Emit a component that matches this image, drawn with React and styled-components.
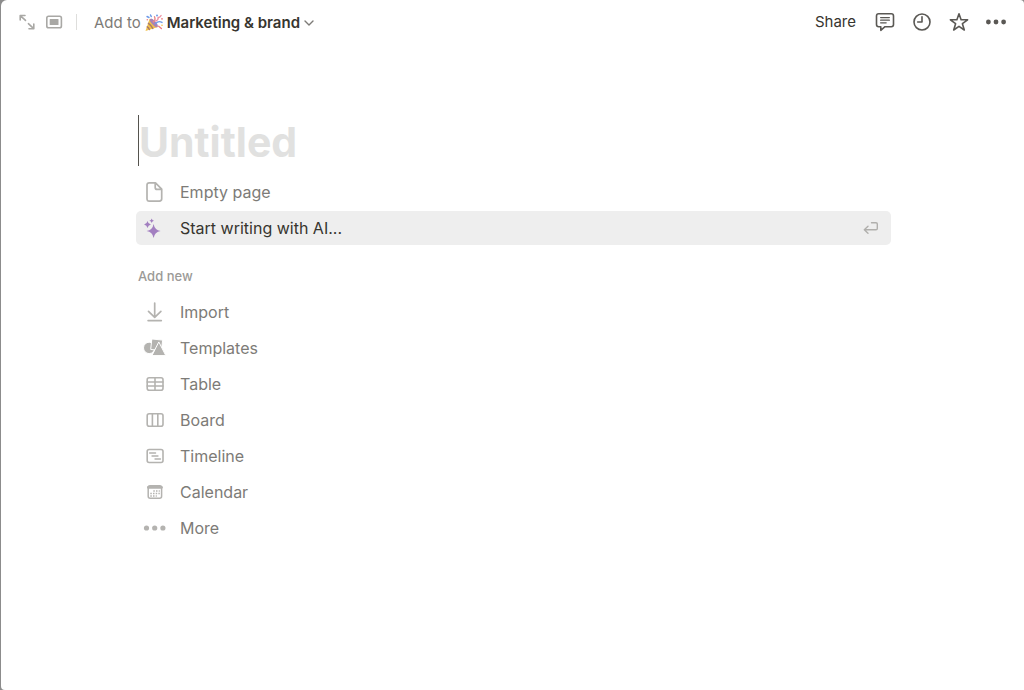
import React from 'react'
import styled, { createGlobalStyle } from 'styled-components'

const GlobalStyle = createGlobalStyle`
    * {
        box-sizing: border-box;
    }

    body {
        margin: 0;
        background: #8c8c8c;
        font-family: Inter, "Liberation Sans", sans-serif;
        color: #37352f;
    }

    button, input {
        font-family: inherit;
        color: inherit;
    }
`

const Page = styled.div`
    min-height: 100vh;
    margin-left: 1px;
    background: #fff;
    border-radius: 6px 4px 0 4px;
`

const Topbar = styled.header`
    display: flex;
    align-items: center;
    justify-content: space-between;
    height: 44px;
    padding: 0 18px 0 17px;
`

const Group = styled.div`
    display: flex;
    align-items: center;
    gap: ${props => props.$gap}px;
`

const PlainButton = styled.button`
    display: flex;
    align-items: center;
    padding: 0;
    border: 0;
    background: none;
    color: ${props => props.$muted ? '#a9a8a5' : '#5a5854'};
    cursor: pointer;
`

const Divider = styled.div`
    width: 1px;
    height: 16px;
    margin: 0 17px 0 13px;
    background: #dededc;
`

const LocationButton = styled(PlainButton)`
    gap: 3px;
    padding-top: 2px;
    font-size: 15px;
    line-height: 20px;
    color: #7d7b77;

    strong {
        font-weight: 600;
        color: #37352f;
    }
`

const ShareButton = styled(PlainButton)`
    margin-right: 2px;
    font-size: 15px;
    line-height: 20px;
    color: #37352f;
`

const Content = styled.main`
    padding: 71px 133px 40px 135px;
`

const TitleInput = styled.input`
    display: block;
    width: calc(100% - 2px);
    height: 51px;
    margin: 0 0 9px 2px;
    padding: 2px 0 0;
    border: 0;
    border-left: 1px solid #55534e;
    outline: 0;
    background: none;
    font-size: 41px;
    font-weight: 700;

    &::placeholder {
        color: #e1e1e0;
        opacity: 1;
    }
`

const List = styled.div`
    display: flex;
    flex-direction: column;
    gap: 2px;
`

const Row = styled.button`
    display: flex;
    align-items: center;
    width: 100%;
    height: 34px;
    padding: 0 12px 0 7px;
    border: 0;
    border-radius: 5px;
    background: ${props => props.$active ? '#eeeeee' : 'none'};
    color: ${props => props.$active ? '#37352f' : '#7d7b77'};
    font-size: 16px;
    line-height: 24px;
    text-align: left;
    cursor: pointer;
`

const RowIcon = styled.span`
    display: flex;
    width: 24px;
    margin-right: 13px;
    color: #b4b3b0;
`

const RowLabel = styled.span`
    flex: 1;
`

const SectionLabel = styled.h2`
    margin: 21px 0 8px 2px;
    font-size: 13px;
    line-height: 21px;
    font-weight: 500;
    color: #9b9a97;
`

const Icon = ({ width = 24, height = 24, stroke = 1.6, children }) => (
    <svg
        width={width}
        height={height}
        viewBox={`0 0 ${width} ${height}`}
        fill="none"
        stroke="currentColor"
        strokeWidth={stroke}
        strokeLinecap="round"
        strokeLinejoin="round"
        aria-hidden="true"
    >
        {children}
    </svg>
)

const ExpandIcon = () => (
    <Icon width={18} height={18} stroke={1.6}>
        <path d="M2.2 7V2.5H7M2.5 2.8l5 4.6M15.8 11v4.7H11M15.4 15.4l-5-4.7" />
    </Icon>
)

const PeekIcon = () => (
    <Icon width={18} height={18} stroke={1.6}>
        <rect x="1.8" y="3.2" width="14.6" height="11.6" rx="1.8" />
        <rect x="4.7" y="5.9" width="8.8" height="6.2" rx=".4" fill="currentColor" stroke="none" />
    </Icon>
)

const PartyIcon = () => (
    <Icon width={20} height={20} stroke={1.4}>
        <path d="M1.5 18L5.6 5.8q5.600 1.600 8.400 8.200z" fill="#f2c14a" stroke="none" />
        <path d="M4.400 10.300q3.200 2.200 4.400 5.300M3.200 13.800q1.600 1 2.200 2.800" stroke="#a97a68" />
        <ellipse cx="9.800" cy="9.900" rx="2" ry="5.400" transform="rotate(-42 9.800 9.900)" fill="#a983b4" stroke="none" />
        <path d="M9.300 8.900q2.700-2.200 1.200-5.200" stroke="#e98a8a" />
        <path d="M11.600 10.400q3-3 6.400-1" stroke="#6d9be8" />
        <path d="M11.800 8q2.800-1 2.300-3.500 1.800.2 3-2" stroke="#ee91a3" />
        <path d="M3 3.500l2 1M6.500 2l.8 1.600" stroke="#6d9be8" />
        <path d="M14.700 13.200l2.700 2.300" stroke="#ec7b82" />
        <g stroke="none">
            <circle cx="13" cy="2.500" r="1" fill="#6d9be8" />
            <circle cx="18" cy="5.800" r=".9" fill="#ec7b82" />
            <circle cx="3.300" cy="6.700" r=".8" fill="#ec7b82" />
            <circle cx="18" cy="12.300" r=".8" fill="#f4c044" />
        </g>
    </Icon>
)

const ChevronIcon = () => (
    <Icon width={12} height={12} stroke={1.4}>
        <path d="M2 4l4 4 4-4" />
    </Icon>
)

const CommentIcon = () => (
    <Icon width={20} height={20}>
        <path d="M3.700 1.800h12.600q2.200 0 2.200 2.200v8.500q0 2.200-2.200 2.200H10l-4.200 3.600v-3.600H3.700q-2.200 0-2.200-2.200V4q0-2.200 2.200-2.200z" />
        <path d="M5.600 5.600h8.800M5.600 8.200h8.800M5.600 10.800h5.600" strokeWidth="1.200" />
    </Icon>
)

const ClockIcon = () => (
    <Icon width={20} height={20}>
        <circle cx="10" cy="10" r="8" />
        <path d="M10 4.800V10H5.700" />
    </Icon>
)

const StarIcon = () => (
    <Icon width={20} height={20}>
        <path d="M10 1.700l2.100 6 6.500.1-5.200 3.900 1.900 6.300-5.300-3.700L4.700 18l1.900-6.300-5.200-3.900 6.500-.1z" />
    </Icon>
)

const MoreIcon = () => (
    <Icon width={20} height={20}>
        <g fill="currentColor" stroke="none">
            <circle cx="2.400" cy="10" r="2.400" />
            <circle cx="10" cy="10" r="2.400" />
            <circle cx="17.600" cy="10" r="2.400" />
        </g>
    </Icon>
)

const DotsIcon = () => (
    <Icon>
        <g fill="currentColor" stroke="none">
            <circle cx="3.500" cy="12" r="2.600" />
            <circle cx="11.700" cy="12" r="2.600" />
            <circle cx="19.900" cy="12" r="2.600" />
        </g>
    </Icon>
)

const PageIcon = () => (
    <Icon stroke={1.7}>
        <path d="M6.300 2.800h6.200l6.200 6.300v9.700q0 2.300-2.300 2.300H6.300Q4 21.100 4 18.800V5.100q0-2.300 2.300-2.300zM12.200 3v4.400q0 2 2 2h4.300" />
    </Icon>
)

const SparkleIcon = () => (
    <Icon>
        <g fill="#a27fc0" stroke="none">
            <path d="M10.600 7.900q1 6 7 7-6 1-7 7-1-6-7-7 6-1 7-7z" />
            <path d="M4.500 5.100q.6 3 3.400 3.500-2.800.5-3.400 3.500-.6-3-3.400-3.500 2.800-.5 3.400-3.500z" />
            <path d="M8.700 2.400q.4 2 2.300 2.300-1.900.3-2.300 2.300-.4-2-2.300-2.300 1.900-.3 2.300-2.300z" />
        </g>
    </Icon>
)

const ImportIcon = () => (
    <Icon stroke={1.700}>
        <path d="M11.700 3v14.200M5.500 11.400l6.200 6 6.200-6M5.100 20.600h13.200" />
    </Icon>
)

const TemplatesIcon = () => (
    <Icon>
        <g fill="currentColor" stroke="#fff" strokeWidth="1" strokeLinejoin="miter">
            <circle cx="6.200" cy="11.900" r="5.700" />
            <path d="M9.200 3l10.400 1.100-1.100 10.500L8.100 13.500z" />
            <path d="M16 6.300l6.800 13.300H9.200z" />
        </g>
    </Icon>
)

const TableIcon = () => (
    <Icon>
        <rect x="4.200" y="5.800" width="15.800" height="12.400" rx="2" />
        <path d="M4.200 10H20M4.200 14H20M12 6v12" />
    </Icon>
)

const BoardIcon = () => (
    <Icon>
        <rect x="4.200" y="5.800" width="15.800" height="12.400" rx="2" />
        <path d="M9.400 6v12M14.800 6v12" />
    </Icon>
)

const TimelineIcon = () => (
    <Icon>
        <rect x="4.200" y="5.500" width="15.800" height="13" rx="2" />
        <path d="M6.600 9h6M9 12h6M12 15h5.500" strokeWidth="1.300" />
    </Icon>
)

const CalendarIcon = () => (
    <Icon stroke={1.500}>
        <rect x="5.200" y="5.700" width="13.400" height="12.600" rx="2" />
        <path d="M5.500 7.200h12.800" strokeWidth="3" />
        <path d="M10.300 11h6.500M7.300 13.500h9.500M7.300 16h6.500" strokeWidth="1.300" strokeDasharray="1.500 1.200" strokeLinecap="butt" />
    </Icon>
)

const ReturnIcon = () => (
    <Icon width={16} height={16} stroke={1.400}>
        <path d="M8.500 2.800H13q1.300 0 1.300 1.300v4.400q0 1.300-1.300 1.300H1.300M5 6.300L1.300 9.800 5 13.300" />
    </Icon>
)

const ReturnHint = styled.span`
    display: flex;
    color: #b0afac;
`

const newItems = [
    { label: 'Import', icon: <ImportIcon /> },
    { label: 'Templates', icon: <TemplatesIcon /> },
    { label: 'Table', icon: <TableIcon /> },
    { label: 'Board', icon: <BoardIcon /> },
    { label: 'Timeline', icon: <TimelineIcon /> },
    { label: 'Calendar', icon: <CalendarIcon /> },
    { label: 'More', icon: <DotsIcon /> },
]

const MenuRow = ({ icon, label, active }) => (
    <Row type="button" $active={active}>
        <RowIcon>{icon}</RowIcon>
        <RowLabel>{label}</RowLabel>
        {active && <ReturnHint><ReturnIcon /></ReturnHint>}
    </Row>
)

const App = () => {
    return (
        <>
            <GlobalStyle />
            <Page>
                <Topbar>
                    <Group $gap={0}>
                        <Group $gap={9}>
                            <PlainButton $muted type="button" aria-label="Open as full page"><ExpandIcon /></PlainButton>
                            <PlainButton $muted type="button" aria-label="Switch peek mode"><PeekIcon /></PlainButton>
                        </Group>
                        <Divider />
                        <LocationButton type="button">
                            <span>Add to</span>
                            <PartyIcon />
                            <strong>Marketing &amp; brand</strong>
                            <ChevronIcon />
                        </LocationButton>
                    </Group>
                    <Group $gap={17}>
                        <ShareButton type="button">Share</ShareButton>
                        <PlainButton type="button" aria-label="Comments"><CommentIcon /></PlainButton>
                        <PlainButton type="button" aria-label="Updates"><ClockIcon /></PlainButton>
                        <PlainButton type="button" aria-label="Favorite"><StarIcon /></PlainButton>
                        <PlainButton type="button" aria-label="More options"><MoreIcon /></PlainButton>
                    </Group>
                </Topbar>
                <Content>
                    <TitleInput placeholder="Untitled" aria-label="Page title" />
                    <List>
                        <MenuRow icon={<PageIcon />} label="Empty page" />
                        <MenuRow icon={<SparkleIcon />} label="Start writing with AI..." active />
                    </List>
                    <SectionLabel>Add new</SectionLabel>
                    <List>
                        {newItems.map(item => (
                            <MenuRow key={item.label} icon={item.icon} label={item.label} />
                        ))}
                    </List>
                </Content>
            </Page>
        </>
    )
}

export default App
